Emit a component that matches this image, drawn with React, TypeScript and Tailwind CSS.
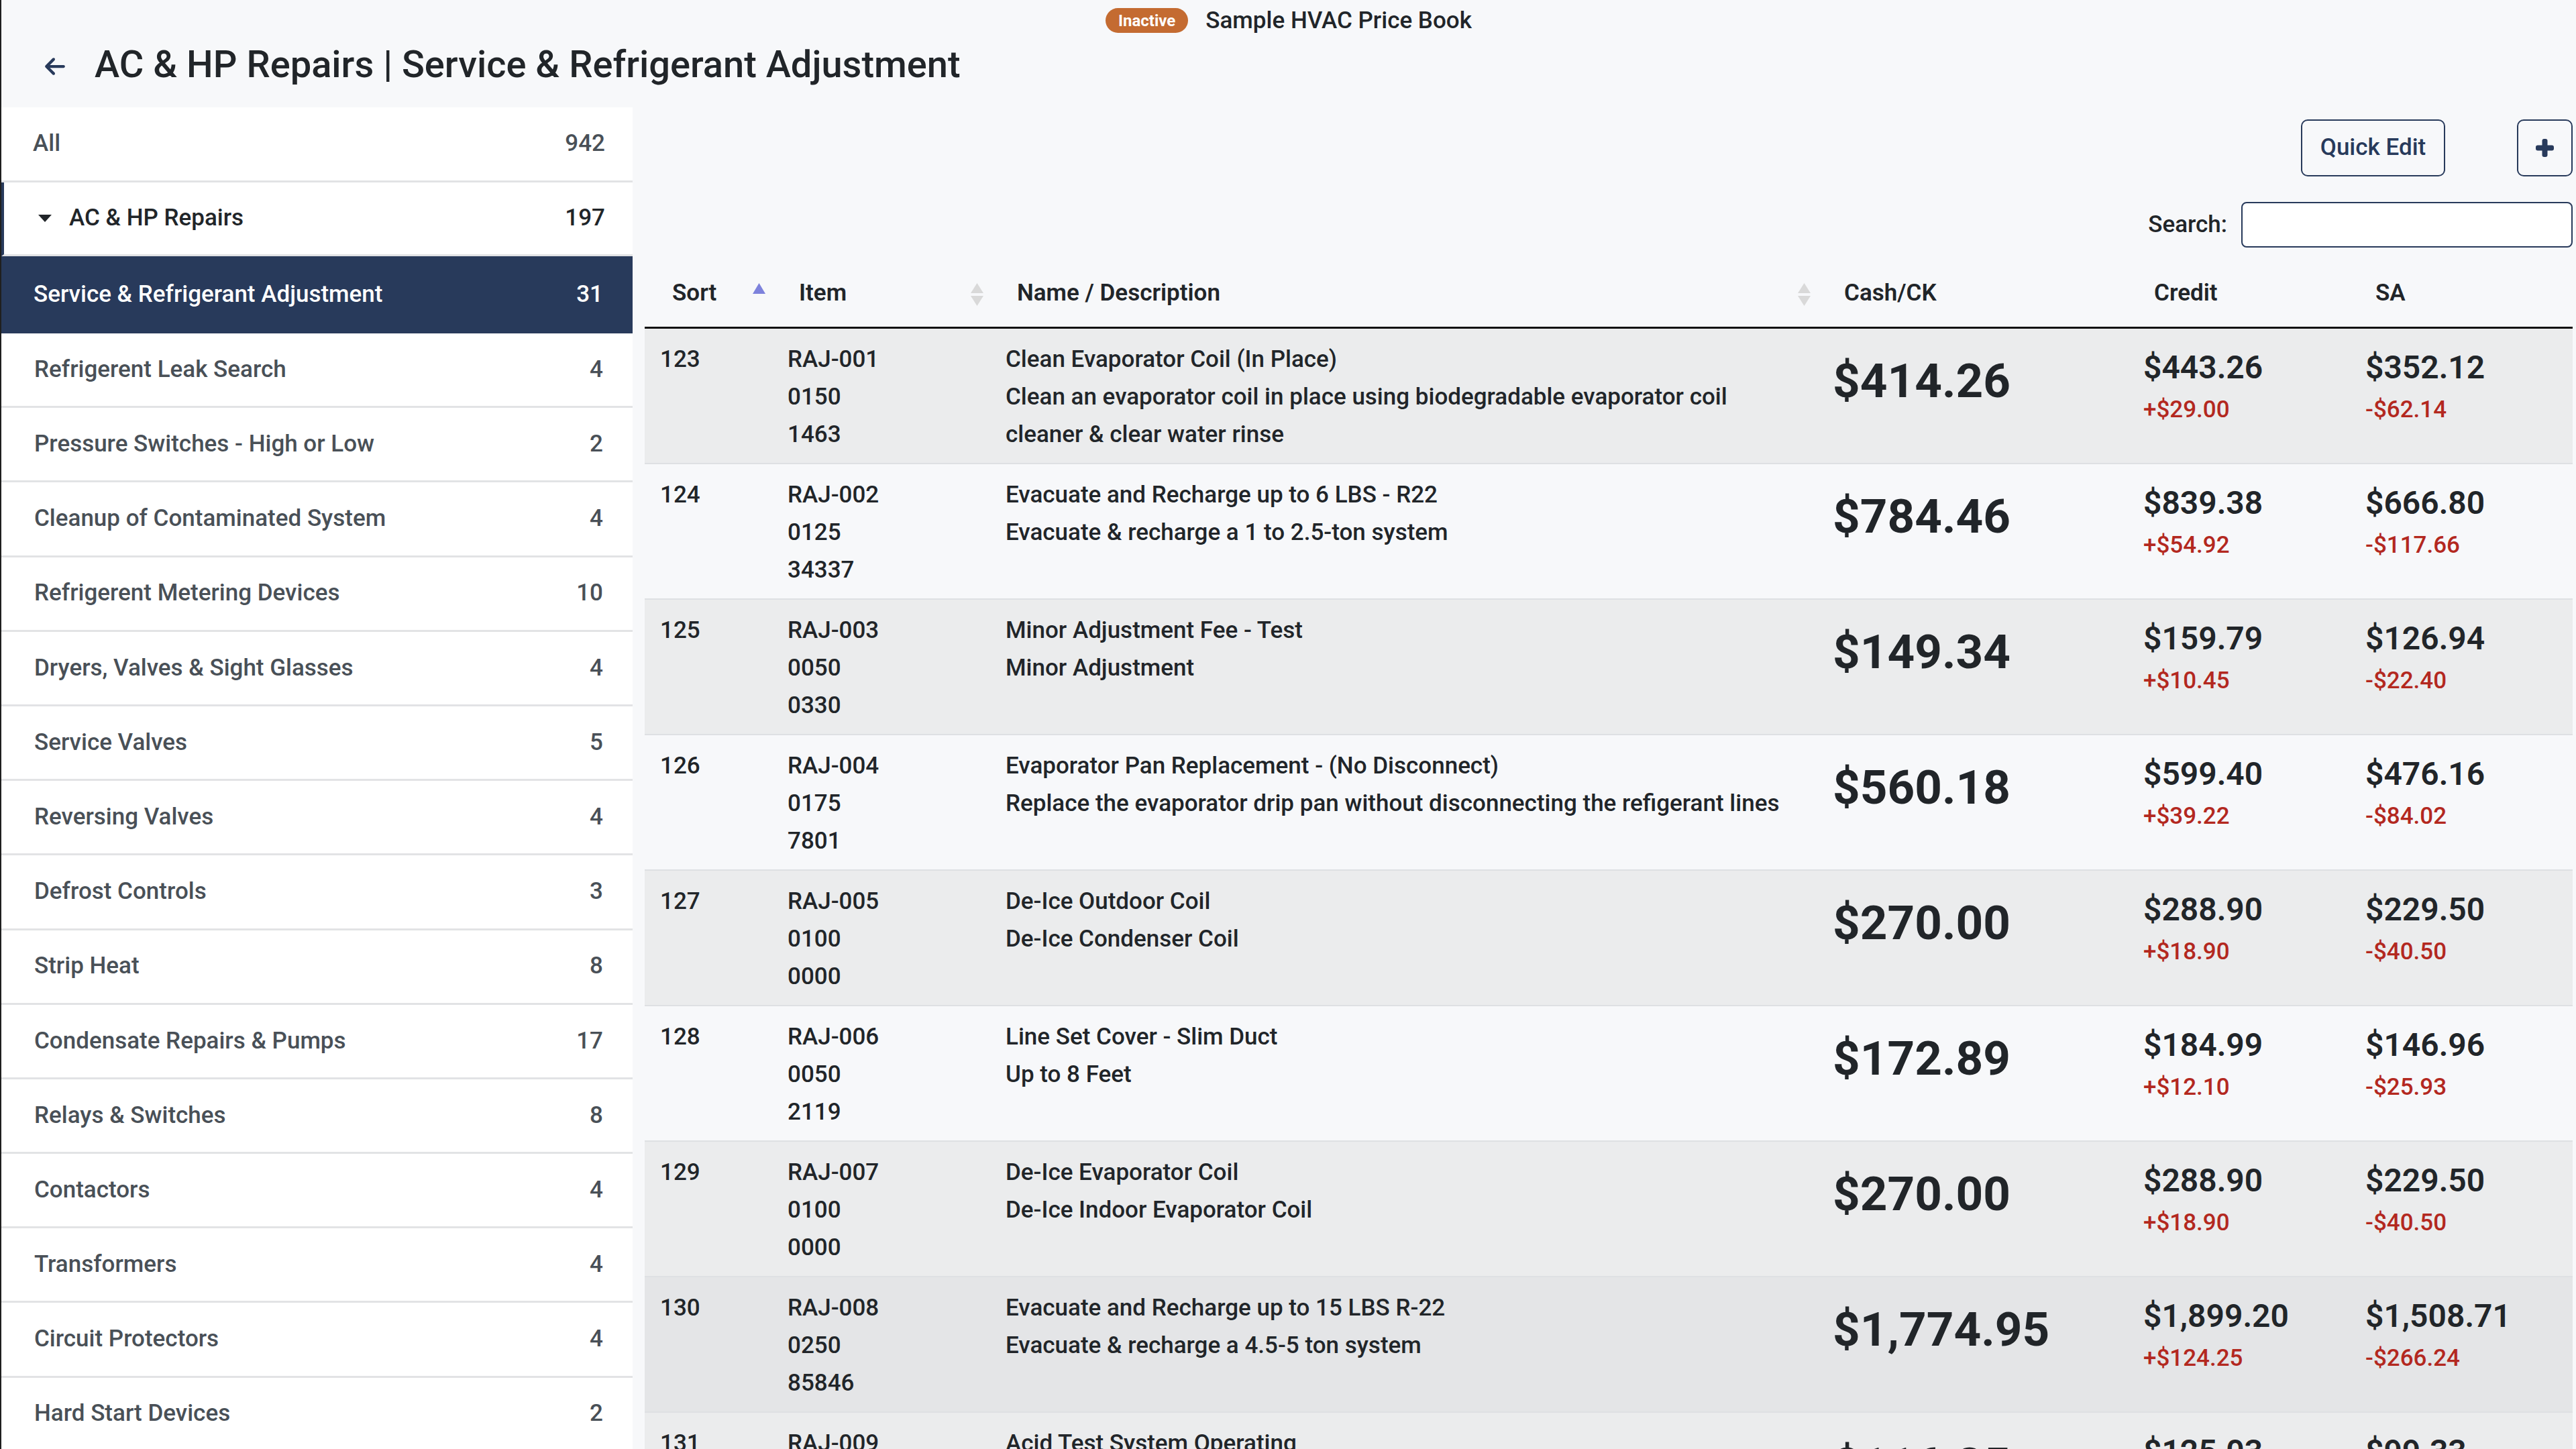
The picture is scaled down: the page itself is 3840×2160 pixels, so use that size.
import React from 'react';

type Row = {
    sort: number;
    item: string[];
    name: string;
    desc: string;
    cash: string;
    credit: string;
    creditDiff: string;
    sa: string;
    saDiff: string;
};

const categories: { name: string; count: number }[] = [
    { name: 'Refrigerent Leak Search', count: 4 },
    { name: 'Pressure Switches - High or Low', count: 2 },
    { name: 'Cleanup of Contaminated System', count: 4 },
    { name: 'Refrigerent Metering Devices', count: 10 },
    { name: 'Dryers, Valves & Sight Glasses', count: 4 },
    { name: 'Service Valves', count: 5 },
    { name: 'Reversing Valves', count: 4 },
    { name: 'Defrost Controls', count: 3 },
    { name: 'Strip Heat', count: 8 },
    { name: 'Condensate Repairs & Pumps', count: 17 },
    { name: 'Relays & Switches', count: 8 },
    { name: 'Contactors', count: 4 },
    { name: 'Transformers', count: 4 },
    { name: 'Circuit Protectors', count: 4 },
    { name: 'Hard Start Devices', count: 2 },
    { name: 'Fan Motors', count: 6 },
];

const rows: Row[] = [
    { sort: 123, item: ['RAJ-001', '0150', '1463'], name: 'Clean Evaporator Coil (In Place)', desc: 'Clean an evaporator coil in place using biodegradable evaporator coil cleaner & clear water rinse', cash: '$414.26', credit: '$443.26', creditDiff: '+$29.00', sa: '$352.12', saDiff: '-$62.14' },
    { sort: 124, item: ['RAJ-002', '0125', '34337'], name: 'Evacuate and Recharge up to 6 LBS - R22', desc: 'Evacuate & recharge a 1 to 2.5-ton system', cash: '$784.46', credit: '$839.38', creditDiff: '+$54.92', sa: '$666.80', saDiff: '-$117.66' },
    { sort: 125, item: ['RAJ-003', '0050', '0330'], name: 'Minor Adjustment Fee - Test', desc: 'Minor Adjustment', cash: '$149.34', credit: '$159.79', creditDiff: '+$10.45', sa: '$126.94', saDiff: '-$22.40' },
    { sort: 126, item: ['RAJ-004', '0175', '7801'], name: 'Evaporator Pan Replacement - (No Disconnect)', desc: 'Replace the evaporator drip pan without disconnecting the refigerant lines', cash: '$560.18', credit: '$599.40', creditDiff: '+$39.22', sa: '$476.16', saDiff: '-$84.02' },
    { sort: 127, item: ['RAJ-005', '0100', '0000'], name: 'De-Ice Outdoor Coil', desc: 'De-Ice Condenser Coil', cash: '$270.00', credit: '$288.90', creditDiff: '+$18.90', sa: '$229.50', saDiff: '-$40.50' },
    { sort: 128, item: ['RAJ-006', '0050', '2119'], name: 'Line Set Cover - Slim Duct', desc: 'Up to 8 Feet', cash: '$172.89', credit: '$184.99', creditDiff: '+$12.10', sa: '$146.96', saDiff: '-$25.93' },
    { sort: 129, item: ['RAJ-007', '0100', '0000'], name: 'De-Ice Evaporator Coil', desc: 'De-Ice Indoor Evaporator Coil', cash: '$270.00', credit: '$288.90', creditDiff: '+$18.90', sa: '$229.50', saDiff: '-$40.50' },
    { sort: 130, item: ['RAJ-008', '0250', '85846'], name: 'Evacuate and Recharge up to 15 LBS R-22', desc: 'Evacuate & recharge a 4.5-5 ton system', cash: '$1,774.95', credit: '$1,899.20', creditDiff: '+$124.25', sa: '$1,508.71', saDiff: '-$266.24' },
    { sort: 131, item: ['RAJ-009', '0050', '0000'], name: 'Acid Test System Operating', desc: 'Acid test the system while operating', cash: '$116.85', credit: '$125.03', creditDiff: '+$8.18', sa: '$99.33', saDiff: '-$17.52' },
];

const SortBoth = () => (
    <svg width="19" height="34" viewBox="0 0 19 34" className="absolute right-[11px] top-[34px]">
        <polygon points="9.5,0 19,15 0,15" fill="#d9d9d9" />
        <polygon points="0,19 19,19 9.5,34" fill="#d9d9d9" />
    </svg>
);

const SortAsc = () => (
    <svg width="19" height="16" viewBox="0 0 19 16" className="absolute right-[11px] top-[34px]">
        <polygon points="9.5,0 19,16 0,16" fill="#7d82dc" />
    </svg>
);

const App = () => {

    return (
        <div className="w-[3840px] h-[2160px] overflow-hidden bg-[#f7f8fa] border-l-2 border-[#1f1f1f] font-['Roboto','Noto_Sans',sans-serif] text-[#212529]">
            {/* 헤더 */}
            <div className="h-[160px] flex flex-col">
                <div className="flex justify-center items-center gap-[26px] pt-[12px] h-[49px]">
                    <span className="h-[37px] px-[19px] rounded-full bg-[#c46b31] text-white font-bold text-[24px] flex items-center">
                        Inactive
                    </span>
                    <span className="font-medium text-[35px] leading-[37px]">Sample HVAC Price Book</span>
                </div>
                <div className="flex items-center mt-[12px] pl-[65px] h-[70px]">
                    <svg width="30" height="34" viewBox="0 0 448 512" className="mt-[6px]">
                        <path fill="#283a5b" d="M9.4 233.4c-12.5 12.5-12.5 32.8 0 45.3l160 160c12.5 12.5 32.8 12.5 45.3 0s12.5-32.8 0-45.3L109.2 288 416 288c17.7 0 32-14.3 32-32s-14.3-32-32-32l-306.7 0L214.6 118.6c12.5-12.5 12.5-32.8 0-45.3s-32.8-12.5-45.3 0l-160 160z" />
                    </svg>
                    <h1 className="ml-[44px] font-medium text-[56px] leading-[70px]">
                        AC &amp; HP Repairs | Service &amp; Refrigerant Adjustment
                    </h1>
                </div>
            </div>

            <div className="flex">
                {/* 카테고리 사이드바 */}
                <div className="w-[941px] shrink-0 bg-white flex flex-col text-[35px] font-medium">
                    <div className="h-[112px] flex items-center justify-between pl-[47px] pr-[41px] border-b-[3px] border-[#e2e3e5] text-[#495057]">
                        <span>All</span>
                        <span>942</span>
                    </div>
                    <div className="h-[110px] flex items-center justify-between pl-[51px] pr-[41px] border-b-[3px] border-[#e2e3e5] border-l-[4px] border-l-[#283a5b] text-[#212529]">
                        <div className="flex items-center gap-[26px]">
                            <svg width="20" height="11" viewBox="0 0 20 11">
                                <polygon points="0,0 20,0 10,11" fill="#212529" />
                            </svg>
                            <span>AC &amp; HP Repairs</span>
                        </div>
                        <span>197</span>
                    </div>
                    <div className="h-[115px] flex items-center justify-between pl-[48px] pr-[44px] bg-[#283a5b] text-white">
                        <span>Service &amp; Refrigerant Adjustment</span>
                        <span>31</span>
                    </div>
                    {categories.map(c => (
                        <div
                            key={`category_${c.name}`}
                            className="h-[111.2px] shrink-0 flex items-center justify-between pl-[49px] pr-[44px] border-b-[3px] border-[#e2e3e5] text-[#495057]">
                            <span>{c.name}</span>
                            <span>{c.count}</span>
                        </div>
                    ))}
                </div>

                {/* 메인 */}
                <div className="flex-1 ml-[18px] pr-[5px] flex flex-col">
                    <div className="flex justify-end gap-[107px] mt-[18px]">
                        <button className="w-[215px] h-[85px] border-2 border-[#283a5b] rounded-[10px] text-[#283a5b] font-medium text-[35px]">
                            Quick Edit
                        </button>
                        <button className="w-[83px] h-[85px] border-2 border-[#283a5b] rounded-[10px] flex items-center justify-center">
                            <svg width="27" height="27" viewBox="0 0 27 27">
                                <rect x="9.5" y="0" width="8" height="27" rx="3" fill="#283a5b" />
                                <rect x="0" y="9.5" width="27" height="8" rx="3" fill="#283a5b" />
                            </svg>
                        </button>
                    </div>
                    <div className="flex justify-end items-center gap-[21px] mt-[38px]">
                        <span className="font-medium text-[35px]">Search:</span>
                        <input className="w-[494px] h-[68px] border-2 border-[#283a5b] rounded-[8px] bg-white" />
                    </div>

                    <table className="mt-[19px] w-full table-fixed border-collapse">
                        <colgroup>
                            <col className="w-[191px]" />
                            <col className="w-[325px]" />
                            <col className="w-[1233px]" />
                            <col className="w-[463px]" />
                            <col className="w-[331px]" />
                            <col />
                        </colgroup>
                        <thead>
                            <tr className="border-b-[3px] border-[#111111] text-[35px] font-semibold text-left">
                                <th className="relative h-[100px] pl-[41px] font-semibold">Sort<SortAsc /></th>
                                <th className="relative h-[100px] pl-[39px] font-semibold">Item<SortBoth /></th>
                                <th className="relative h-[100px] pl-[39px] font-semibold">Name / Description<SortBoth /></th>
                                <th className="h-[100px] pl-[39px] font-semibold">Cash/CK</th>
                                <th className="h-[100px] pl-[38px] font-semibold">Credit</th>
                                <th className="h-[100px] pl-[37px] font-semibold">SA</th>
                            </tr>
                        </thead>
                        <tbody>
                            {rows.map((r, i) => (
                                <tr
                                    key={`price_row_${r.sort}`}
                                    className={`border-b-2 border-[#dee0e3] align-top text-[35px] font-medium leading-[56px] ${r.sort === 130 ? 'bg-[#e4e5e7]' : i % 2 === 0 ? 'bg-[#ebeced]' : 'bg-[#f7f8fa]'}`}>
                                    <td className="pl-[23px] pt-[18px] pb-[14px]">{r.sort}</td>
                                    <td className="pl-[22px] pt-[18px] pb-[14px]">
                                        {r.item.map(t => (
                                            <div key={`item_${r.sort}_${t}`}>{t}</div>
                                        ))}
                                    </td>
                                    <td className="pl-[22px] pr-[22px] pt-[18px] pb-[14px]">
                                        <div>{r.name}</div>
                                        <div>{r.desc}</div>
                                    </td>
                                    <td className="pl-[22px] pt-[18px] pb-[14px]">
                                        <div className="mt-[15px] text-[71px] font-bold leading-[90px]">{r.cash}</div>
                                    </td>
                                    <td className="pl-[22px] pt-[18px] pb-[14px]">
                                        <div className="mt-[12px] text-[48px] font-semibold leading-[56px]">{r.credit}</div>
                                        <div className="mt-[7px] text-[35px] text-[#b3281f]">{r.creditDiff}</div>
                                    </td>
                                    <td className="pl-[22px] pt-[18px] pb-[14px]">
                                        <div className="mt-[12px] text-[48px] font-semibold leading-[56px]">{r.sa}</div>
                                        <div className="mt-[7px] text-[35px] text-[#b3281f]">{r.saDiff}</div>
                                    </td>
                                </tr>
                            ))}
                        </tbody>
                    </table>
                </div>
            </div>
        </div>
    )
}

export default App
